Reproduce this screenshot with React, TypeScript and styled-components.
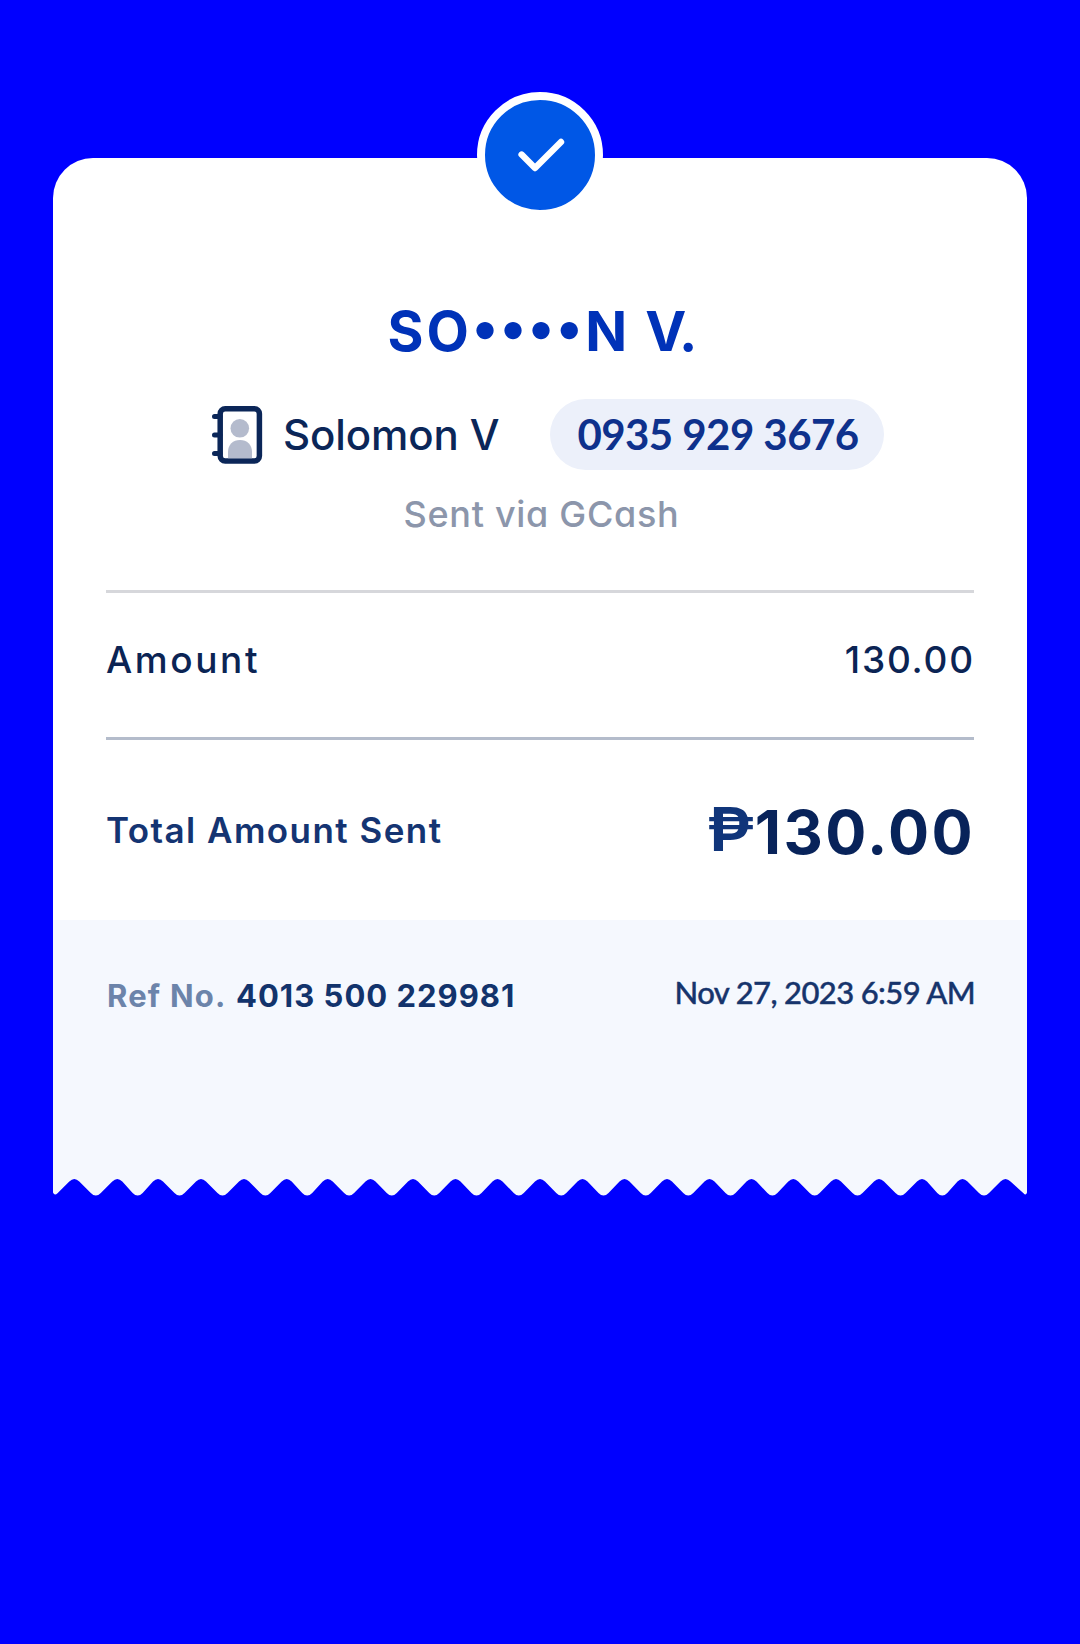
import React from "react";
import styled, { createGlobalStyle } from "styled-components";

const GlobalStyle = createGlobalStyle`
  * { box-sizing: border-box; }
  body { margin: 0; background: #0000ff; }
`;

const sans = `"Inter", "Liberation Sans", sans-serif`;
const humanist = `"Lato", "Liberation Sans", sans-serif`;

const Page = styled.main`
  width: 1080px;
  min-height: 1644px;
  padding: 158px 53px 0;
  background: #0000ff;
  font-family: ${sans};
  white-space: nowrap;
`;

const Card = styled.article`
  position: relative;
  width: 974px;
  display: flex;
  flex-direction: column;
`;

const Badge = styled.div`
  position: absolute;
  top: -66px;
  left: 50%;
  width: 126px;
  height: 126px;
  margin-left: -63px;
  border: 8px solid #fff;
  border-radius: 50%;
  background: #0057e6;
`;

const Body = styled.section`
  height: 762px;
  padding: 142px 53px 0;
  border-radius: 40px 40px 0 0;
  background: #fff;
`;

const Recipient = styled.h1`
  margin: 0;
  display: flex;
  padding-left: 281.5px;
  font-size: 55px;
  line-height: 62px;
  font-weight: 700;
  color: #0032b8;
`;

const NamePart = styled.span<{ $spacing: number; $gap?: number }>`
  letter-spacing: ${(p) => p.$spacing}px;
  margin-left: ${(p) => p.$gap ?? 0}px;
  word-spacing: 9px;
  font-feature-settings: "case";
`;

const Contact = styled.div`
  display: flex;
  align-items: center;
  height: 71px;
  margin-top: 37px;
  padding-left: 106px;
`;

const ContactName = styled.span`
  width: 267px;
  margin-left: 20px;
  font-size: 42px;
  font-weight: 500;
  letter-spacing: -0.1px;
  color: #0b2658;
`;

const Phone = styled.span`
  width: 334px;
  height: 71px;
  padding-left: 2px;
  border-radius: 36px;
  background: #ecf0fa;
  font-family: ${humanist};
  font-size: 42px;
  line-height: 71px;
  font-weight: 700;
  letter-spacing: -0.55px;
  text-align: center;
  color: #0e318c;
`;

const Via = styled.p`
  margin: 22px 0 54px;
  padding-left: 3px;
  font-size: 36px;
  line-height: 44px;
  font-weight: 500;
  letter-spacing: 0.7px;
  text-align: center;
  color: #8c96ab;
  font-feature-settings: "cv11";
`;

const Rule = styled.hr<{ $color: string }>`
  height: 3px;
  margin: 0;
  border: 0;
  background: ${(p) => p.$color};
`;

const Row = styled.div<{ $height: number; $lift?: number }>`
  display: flex;
  justify-content: space-between;
  align-items: center;
  height: ${(p) => p.$height}px;
  padding-bottom: ${(p) => p.$lift ?? 0}px;
`;

const Label = styled.span<{ $size: number; $spacing: number; $color: string; $weight: number }>`
  font-size: ${(p) => p.$size}px;
  font-weight: ${(p) => p.$weight};
  letter-spacing: ${(p) => p.$spacing}px;
  color: ${(p) => p.$color};
`;

const Amount = styled.span`
  margin-right: -1px;
  font-size: 37px;
  font-weight: 500;
  letter-spacing: 1.8px;
  color: #0b2454;
`;

const Total = styled.span`
  display: flex;
  align-items: baseline;
  margin: 4px -1px 0 0;
  font-size: 61px;
  font-weight: 700;
  letter-spacing: 2.4px;
  color: #08235a;
`;

const Peso = styled.span`
  position: relative;
  top: -3px;
  font-size: 61px;
  font-weight: 600;
  letter-spacing: 0;
  transform: scaleX(1.13);
  transform-origin: right;
  color: #10357a;
`;

const Footer = styled.footer`
  display: flex;
  justify-content: space-between;
  align-items: flex-start;
  height: 255px;
  padding: 52px 53px 0;
  background: #f5f8fe;
  line-height: 40px;
`;

const Reference = styled.span`
  display: flex;
  margin-top: 4px;
  font-size: 31px;
  font-weight: 700;
  letter-spacing: 1px;
  color: #12336c;
`;

const RefLabel = styled.span`
  width: 130px;
  padding-left: 1px;
  letter-spacing: 1.2px;
  color: #6c84aa;
`;

const DateText = styled.time`
  margin-right: -1px;
  font-family: ${humanist};
  font-size: 31px;
  font-weight: 500;
  letter-spacing: -0.62px;
  -webkit-text-stroke: 0.4px #16346c;
  color: #16346c;
`;

const Teeth = styled.svg`
  display: block;
`;

const NOTCHES = [
  74.3, 117.3, 158, 201, 244, 286.7, 327.7, 370.5, 413, 455.5, 497.5, 540,
  582.5, 624.5, 667, 709.5, 751.5, 793.3, 836, 879, 922, 962.5, 1005.5,
].map((x) => x - 53);

function tornEdge() {
  const top = 1.5;
  const bottom = 23;
  const r = 5;
  const pts: [number, number][] = [];
  NOTCHES.forEach((x, i) => {
    pts.push([x, top]);
    if (i < NOTCHES.length - 1) pts.push([(x + NOTCHES[i + 1]) / 2, bottom]);
  });
  let d = "M0 0V17.5Q1.5 21 4.5 18.3";
  pts.forEach(([x, y]) => {
    const edge = y === top ? y + r : y - r;
    d += `L${x - r} ${edge}Q${x} ${y} ${x + r} ${edge}`;
  });
  return d + "L970.5 18.3Q973 21 974 17.5V0Z";
}

const ContactIcon = () => (
  <svg width="51" height="58" viewBox="0 0 51 58" fill="none">
    <path d="M2.5 10.5H8M2.5 29H8M2.5 47.5H8" stroke="#0b2658" strokeWidth="5" strokeLinecap="round" />
    <rect x="8.2" y="2.8" width="39.2" height="52.2" rx="5" stroke="#0b2658" strokeWidth="5.5" />
    <circle cx="27.8" cy="22.3" r="9.3" fill="#b4bbcd" />
    <path d="M16 52.3V46C16 38.5 21 34 28 34S40 38.5 40 46V52.3Z" fill="#b4bbcd" />
  </svg>
);

export default function App() {
  return (
    <Page>
      <GlobalStyle />
      <Card>
        <Body>
          <Recipient>
            <NamePart $spacing={3}>SO</NamePart>
            <NamePart $spacing={2}>••••</NamePart>
            <NamePart $spacing={-2} $gap={1}>N V.</NamePart>
          </Recipient>
          <Contact>
            <ContactIcon />
            <ContactName>Solomon V</ContactName>
            <Phone>0935 929 3676</Phone>
          </Contact>
          <Via>Sent via GCash</Via>
          <Rule $color="#d6d7db" />
          <Row $height={144} $lift={12}>
            <Label $size={37} $spacing={2.6} $weight={550} $color="#0b2454">Amount</Label>
            <Amount>130.00</Amount>
          </Row>
          <Rule $color="#b4bccb" />
          <Row $height={180}>
            <Label $size={35} $spacing={1.45} $weight={600} $color="#143472">Total Amount Sent</Label>
            <Total><Peso>₱</Peso>130.00</Total>
          </Row>
        </Body>
        <Footer>
          <Reference><RefLabel>Ref No.</RefLabel>4013 500 229981</Reference>
          <DateText>Nov 27, 2023 6:59 AM</DateText>
        </Footer>
        <Teeth width="974" height="24" viewBox="0 0 974 24">
          <path d={tornEdge()} fill="#f5f8fe" />
        </Teeth>
        <Badge>
          <svg width="110" height="110" viewBox="0 0 110 110" fill="none">
            <path d="M36.6 54.6L50 68L76 42" stroke="#fff" strokeWidth="6.4" strokeLinecap="round" strokeLinejoin="round" />
          </svg>
        </Badge>
      </Card>
    </Page>
  );
}
